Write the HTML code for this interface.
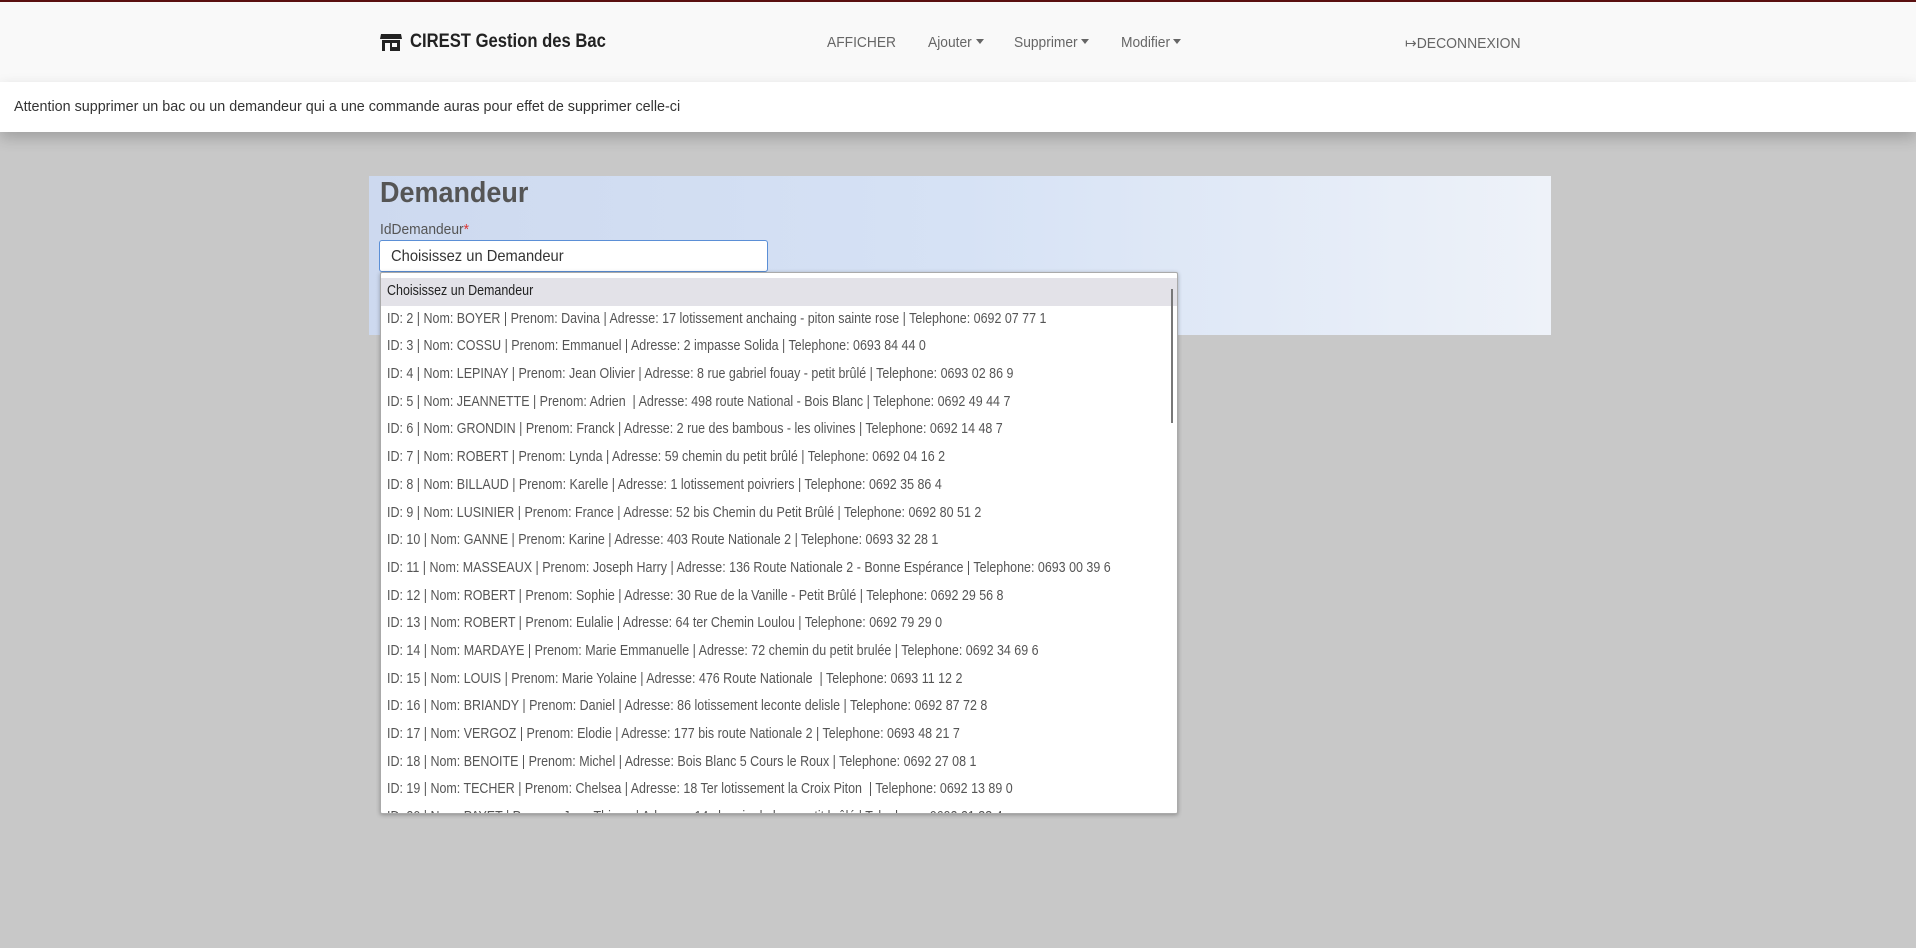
<!DOCTYPE html>
<html><head><meta charset="utf-8"><style>
*{box-sizing:border-box;margin:0;padding:0}
body{width:1916px;height:948px;background:#c8c8c8;font-family:"Liberation Sans",sans-serif;color:#444;position:relative;overflow:hidden}
.c{display:inline-block;transform-origin:0 50%;white-space:nowrap}
.nav{position:absolute;left:0;top:0;width:1916px;height:82px;background:#f9f9f9;border-top:2px solid #5a1010;box-shadow:0 2px 4px rgba(0,0,0,.1)}
.brand{position:absolute;left:380px;top:29px;font-weight:bold;font-size:19px;color:#222;display:flex;align-items:center;gap:8px}
.nl{position:absolute;top:32px;font-size:15px;color:#666}
.car:after{content:"";display:inline-block;margin-left:4px;vertical-align:3px;border-left:4px solid transparent;border-right:4px solid transparent;border-top:5px solid #666}
.alert{position:absolute;left:0;top:82px;width:1916px;height:50px;background:#fff;box-shadow:0 6px 14px rgba(0,0,0,.2);font-size:15px;padding:16px 14px;color:#333}
.card{position:absolute;left:369px;top:176px;width:1182px;height:159px;background:linear-gradient(90deg,#cdd9ef,#d6e2f5 50%,#eef2f9)}
h1{position:absolute;left:11px;top:1px;font-size:29px;color:#555;font-weight:bold}
.lab{position:absolute;left:11px;top:45px;font-size:15px;color:#555}
.inp{position:absolute;left:10px;top:64px;width:389px;height:32px;background:#fff;border:1px solid #5b8fd6;border-radius:3px;font-size:16px;padding:7px 11px;color:#333}
.dd{position:absolute;left:380px;top:272px;width:798px;height:542px;background:#fff;border:1px solid #aaa;border-radius:2px;box-shadow:0 1px 4px rgba(0,0,0,.3);overflow:hidden;padding-top:5px}
.r{height:27.7px;line-height:27.7px;font-size:14.5px;padding-left:6px;color:#555;white-space:nowrap}
.r span{display:inline-block;transform:scaleX(.86);transform-origin:0 50%}
.r.h{background:#e3e2e8;color:#222}
.sb{position:absolute;right:4px;top:16px;width:2px;height:134px;background:#777}
</style></head><body>
<div class="nav">
<div class="brand"><svg width="22" height="18" viewBox="0 0 22 18"><path d="M1 1h20l1 5H0z" fill="#222"/><rect x="2" y="7" width="18" height="11" fill="#222"/><rect x="5" y="10" width="5" height="8" fill="#f9f9f9"/><rect x="12" y="10" width="5" height="4" fill="#f9f9f9"/></svg><span class="c" style="transform:scaleX(.875)">CIREST Gestion des Bac</span></div>
<div class="nl" style="left:827px"><span class="c" style="transform:scaleX(.92)">AFFICHER</span></div>
<div class="nl car" style="left:928px"><span class="c" style="transform:scaleX(.92);margin-right:-4px">Ajouter</span></div>
<div class="nl car" style="left:1014px"><span class="c" style="transform:scaleX(.92);margin-right:-6px">Supprimer</span></div>
<div class="nl car" style="left:1121px"><span class="c" style="transform:scaleX(.92);margin-right:-5px">Modifier</span></div>
<div class="nl" style="left:1405px"><span class="c" style="transform:scaleX(.93)">&#x21A6;DECONNEXION</span></div>
</div>
<div class="alert"><span class="c" style="transform:scaleX(.956)">Attention supprimer un bac ou un demandeur qui a une commande auras pour effet de supprimer celle-ci</span></div>
<div class="card"><h1><span class="c" style="transform:scaleX(.93)">Demandeur</span></h1><div class="lab"><span class="c" style="transform:scaleX(.92)">IdDemandeur<span style="color:#d33">*</span></span></div><div class="inp"><span class="c" style="transform:scaleX(.92)">Choisissez un Demandeur</span></div></div>
<div class="dd"><div class="sb"></div>
<div class="r h"><span>Choisissez un Demandeur</span></div>
<div class="r"><span>ID: 2 | Nom: BOYER | Prenom: Davina | Adresse: 17 lotissement anchaing - piton sainte rose | Telephone: 0692 07 77 1</span></div>
<div class="r"><span>ID: 3 | Nom: COSSU | Prenom: Emmanuel | Adresse: 2 impasse Solida | Telephone: 0693 84 44 0</span></div>
<div class="r"><span>ID: 4 | Nom: LEPINAY | Prenom: Jean Olivier | Adresse: 8 rue gabriel fouay - petit brûlé | Telephone: 0693 02 86 9</span></div>
<div class="r"><span>ID: 5 | Nom: JEANNETTE | Prenom: Adrien &nbsp;| Adresse: 498 route National - Bois Blanc | Telephone: 0692 49 44 7</span></div>
<div class="r"><span>ID: 6 | Nom: GRONDIN | Prenom: Franck | Adresse: 2 rue des bambous - les olivines | Telephone: 0692 14 48 7</span></div>
<div class="r"><span>ID: 7 | Nom: ROBERT | Prenom: Lynda | Adresse: 59 chemin du petit brûlé | Telephone: 0692 04 16 2</span></div>
<div class="r"><span>ID: 8 | Nom: BILLAUD | Prenom: Karelle | Adresse: 1 lotissement poivriers | Telephone: 0692 35 86 4</span></div>
<div class="r"><span>ID: 9 | Nom: LUSINIER | Prenom: France | Adresse: 52 bis Chemin du Petit Brûlé | Telephone: 0692 80 51 2</span></div>
<div class="r"><span>ID: 10 | Nom: GANNE | Prenom: Karine | Adresse: 403 Route Nationale 2 | Telephone: 0693 32 28 1</span></div>
<div class="r"><span>ID: 11 | Nom: MASSEAUX | Prenom: Joseph Harry | Adresse: 136 Route Nationale 2 - Bonne Espérance | Telephone: 0693 00 39 6</span></div>
<div class="r"><span>ID: 12 | Nom: ROBERT | Prenom: Sophie | Adresse: 30 Rue de la Vanille - Petit Brûlé | Telephone: 0692 29 56 8</span></div>
<div class="r"><span>ID: 13 | Nom: ROBERT | Prenom: Eulalie | Adresse: 64 ter Chemin Loulou | Telephone: 0692 79 29 0</span></div>
<div class="r"><span>ID: 14 | Nom: MARDAYE | Prenom: Marie Emmanuelle | Adresse: 72 chemin du petit brulée | Telephone: 0692 34 69 6</span></div>
<div class="r"><span>ID: 15 | Nom: LOUIS | Prenom: Marie Yolaine | Adresse: 476 Route Nationale &nbsp;| Telephone: 0693 11 12 2</span></div>
<div class="r"><span>ID: 16 | Nom: BRIANDY | Prenom: Daniel | Adresse: 86 lotissement leconte delisle | Telephone: 0692 87 72 8</span></div>
<div class="r"><span>ID: 17 | Nom: VERGOZ | Prenom: Elodie | Adresse: 177 bis route Nationale 2 | Telephone: 0693 48 21 7</span></div>
<div class="r"><span>ID: 18 | Nom: BENOITE | Prenom: Michel | Adresse: Bois Blanc 5 Cours le Roux | Telephone: 0692 27 08 1</span></div>
<div class="r"><span>ID: 19 | Nom: TECHER | Prenom: Chelsea | Adresse: 18 Ter lotissement la Croix Piton &nbsp;| Telephone: 0692 13 89 0</span></div>
<div class="r"><span>ID: 20 | Nom: PAYET | Prenom: Jean Thierry | Adresse: 14 chemin du bras petit brûlé | Telephone: 0692 21 33 4</span></div>
</div>
</body></html>
